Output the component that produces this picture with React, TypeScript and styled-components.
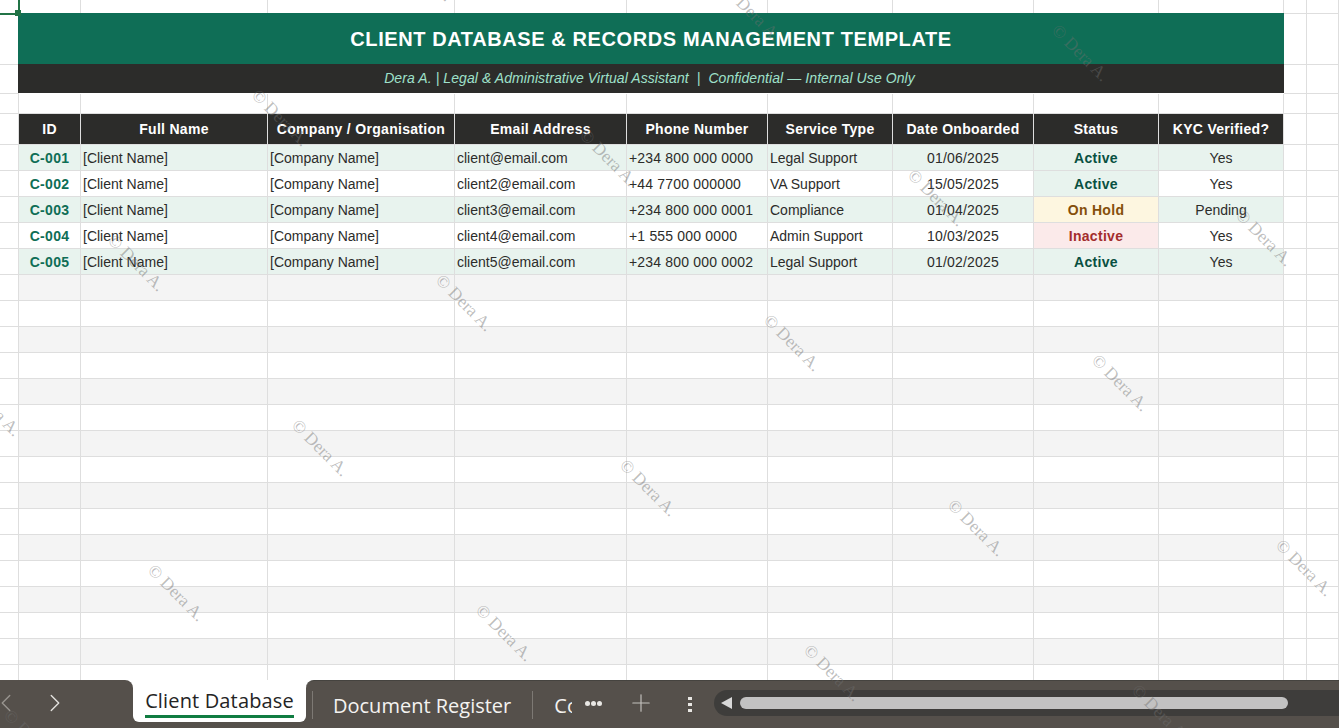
import React, { FC } from 'react'
import styled, { createGlobalStyle } from 'styled-components'
import { ChevronLeft, ChevronRight, Plus } from 'lucide-react'

type Tone = 'none' | 'tint' | 'grey' | 'hold' | 'off'

const clients = [
  { id: 'C-001', name: '[Client Name]', company: '[Company Name]', email: 'client@email.com', phone: '+234 800 000 0000', service: 'Legal Support', date: '01/06/2025', status: 'Active', kyc: 'Yes' },
  { id: 'C-002', name: '[Client Name]', company: '[Company Name]', email: 'client2@email.com', phone: '+44 7700 000000', service: 'VA Support', date: '15/05/2025', status: 'Active', kyc: 'Yes' },
  { id: 'C-003', name: '[Client Name]', company: '[Company Name]', email: 'client3@email.com', phone: '+234 800 000 0001', service: 'Compliance', date: '01/04/2025', status: 'On Hold', kyc: 'Pending' },
  { id: 'C-004', name: '[Client Name]', company: '[Company Name]', email: 'client4@email.com', phone: '+1 555 000 0000', service: 'Admin Support', date: '10/03/2025', status: 'Inactive', kyc: 'Yes' },
  { id: 'C-005', name: '[Client Name]', company: '[Company Name]', email: 'client5@email.com', phone: '+234 800 000 0002', service: 'Legal Support', date: '01/02/2025', status: 'Active', kyc: 'Yes' },
]

const headers = ['ID', 'Full Name', 'Company / Organisation', 'Email Address', 'Phone Number', 'Service Type', 'Date Onboarded', 'Status', 'KYC Verified?']

const statusTone: Record<string, Tone> = { Active: 'tint', 'On Hold': 'hold', Inactive: 'off' }
const statusColor: Record<string, string> = { Active: '#085041', 'On Hold': '#854f0b', Inactive: '#a32d2d' }

const toneColor: Record<Tone, string> = {
  none: '#ffffff',
  tint: '#e8f3ee',
  grey: '#f4f4f4',
  hold: '#fdf6e0',
  off: '#fbeaea',
}

// watermark lattice, one repeat every (328, 40) and (-144, 145)
const marks: [number, number][] = []
for (let r = -1; r <= 4; r++) {
  for (let c = 0; c <= 4; c++) {
    const x = 255 + r * -144 + c * 328
    const y = 82 + r * 145 + c * 40
    if (x > -80 && y > -80 && x < 1339 && y < 728) marks.push([x, y])
  }
}

const App: FC = () => {
  return (
    <Page>
      <GlobalStyle />
      <Sheet>
        <Row $height={14}>
          <EdgeCells />
        </Row>
        <Row $height={51}>
          <Gutter />
          <TitleBand>CLIENT DATABASE &amp; RECORDS MANAGEMENT TEMPLATE</TitleBand>
          <Spare />
          <Spare />
        </Row>
        <Row $height={29}>
          <Gutter />
          <SubBand>Dera A. | Legal &amp; Administrative Virtual Assistant &nbsp;|&nbsp; Confidential — Internal Use Only</SubBand>
          <Spare />
          <Spare />
        </Row>
        <Row $height={20}>
          <EdgeCells />
        </Row>
        <Row $height={31}>
          <Gutter />
          {headers.map((h) => (
            <HeadCell key={h}>{h}</HeadCell>
          ))}
          <Spare />
          <Spare />
        </Row>
        {clients.map((c, i) => {
          const tone: Tone = i % 2 === 0 ? 'tint' : 'none'
          return (
            <Row key={c.id} $height={26}>
              <Gutter />
              <Cell $tone={tone} $center $bold $color="#0f6e56">{c.id}</Cell>
              <Cell $tone={tone}>{c.name}</Cell>
              <Cell $tone={tone}>{c.company}</Cell>
              <Cell $tone={tone}>{c.email}</Cell>
              <Cell $tone={tone} $digits>{c.phone}</Cell>
              <Cell $tone={tone}>{c.service}</Cell>
              <Cell $tone={tone} $center $digits>{c.date}</Cell>
              <Cell $tone={statusTone[c.status]} $center $bold $color={statusColor[c.status]}>{c.status}</Cell>
              <Cell $tone={tone} $center>{c.kyc}</Cell>
              <Spare />
              <Spare />
            </Row>
          )
        })}
        {Array.from({ length: 16 }).map((_, i) => (
          <Row key={i} $height={26}>
            <Gutter />
            {headers.map((h) => (
              <Cell key={h} $tone={i % 2 === 0 ? 'grey' : 'none'} />
            ))}
            <Spare />
            <Spare />
          </Row>
        ))}
      </Sheet>

      <TabBar>
        <NavGroup>
          <NavLeft><ChevronLeft size={30} strokeWidth={1.1} /></NavLeft>
          <NavRight><ChevronRight size={30} strokeWidth={1.1} /></NavRight>
        </NavGroup>
        <ActiveSlot>
          <ActiveTab><ActiveLabel>Client Database</ActiveLabel></ActiveTab>
        </ActiveSlot>
        <TabRest>
          <FirstDivider />
          <SheetTab>Document Register</SheetTab>
          <TabDivider />
          <ClippedTab><span>Compliance</span></ClippedTab>
          <MoreDots>
            <Dot /><Dot /><Dot />
          </MoreDots>
          <AddTab><Plus size={28} strokeWidth={1} /></AddTab>
          <MenuDots>
            <MenuDot /><MenuDot /><MenuDot />
          </MenuDots>
          <ScrollTrack>
            <ScrollArrow />
            <ScrollThumb />
          </ScrollTrack>
        </TabRest>
      </TabBar>

      <SelectEdgeH />
      <SelectEdgeV />
      <SelectHandle />
      {marks.map(([x, y]) => (
        <Watermark key={`${x}-${y}`} $x={x} $y={y}>© Dera A.</Watermark>
      ))}
    </Page>
  )
}

const EdgeCells: FC = () => (
  <>
    <Gutter />
    {headers.map((h) => (
      <Cell key={h} $tone="none" />
    ))}
    <Spare />
    <Spare />
  </>
)

export default App

const GlobalStyle = createGlobalStyle`
  html, body {
    margin: 0;
    padding: 0;
    background: #fff;
  }
`

const Page = styled.div`
  position: relative;
  display: flex;
  flex-direction: column;
  width: 100%;
  height: 100vh;
  overflow: hidden;
  font-family: 'Liberation Sans', Arial, sans-serif;
  font-size: 14px;
  color: #2c2c2a;
  background: #fff;
`

const Sheet = styled.div`
  flex: 0 0 680px;
  height: 680px;
  overflow: hidden;
`

const Row = styled.div<{ $height: number }>`
  display: grid;
  grid-template-columns: 19px 62px 187px 187px 172px 141px 125px 141px 125px 125px 23px 1fr;
  height: ${(p) => p.$height}px;
`

const Gutter = styled.div`
  box-sizing: border-box;
  border-right: 1px solid #dedede;
  border-bottom: 1px solid #dedede;
`

const Spare = styled(Gutter)``

const TitleBand = styled.div`
  grid-column: 2 / 11;
  display: flex;
  align-items: center;
  justify-content: center;
  margin: -1px 0 0 -1px;
  background: #0f6e56;
  color: #fff;
  font-size: 20px;
  font-weight: 700;
  letter-spacing: 0.6px;
`

const SubBand = styled.div`
  grid-column: 2 / 11;
  display: flex;
  align-items: center;
  justify-content: center;
  margin: -1px 0 1px -1px;
  padding: 0 3px 2px 0;
  background: #2c2c2a;
  color: #9fe1cb;
  font-style: italic;
  letter-spacing: 0.08px;
  white-space: pre;
`

const HeadCell = styled.div`
  box-sizing: border-box;
  display: flex;
  align-items: center;
  justify-content: center;
  border-right: 1px solid #dedede;
  border-bottom: 1px solid #dedede;
  background: #2c2c2a;
  color: #fff;
  font-weight: 700;
  letter-spacing: 0.3px;
  white-space: nowrap;
`

const Cell = styled.div<{ $tone: Tone; $center?: boolean; $bold?: boolean; $digits?: boolean; $color?: string }>`
  box-sizing: border-box;
  display: flex;
  align-items: center;
  justify-content: ${(p) => (p.$center ? 'center' : 'flex-start')};
  padding-left: ${(p) => (p.$center ? 0 : 2)}px;
  border-right: 1px solid #dedede;
  border-bottom: 1px solid #dedede;
  background: ${(p) => toneColor[p.$tone]};
  color: ${(p) => p.$color || '#2c2c2a'};
  font-weight: ${(p) => (p.$bold ? 700 : 400)};
  letter-spacing: ${(p) => (p.$bold ? '0.3px' : p.$digits ? '0.18px' : 0)};
  white-space: nowrap;
`

const TabBar = styled.div`
  flex: 0 0 48px;
  display: flex;
  height: 48px;
  font-family: 'Open Sans', 'Noto Sans', sans-serif;
`

const NavGroup = styled.div`
  flex: 0 0 133px;
  box-sizing: border-box;
  display: flex;
  align-items: center;
  padding-bottom: 2px;
  background: #55504b;
  border-top-right-radius: 8px;
`

const NavLeft = styled.span`
  flex: 0 0 30px;
  display: flex;
  margin-left: -9px;
  color: #99958f;
`

const NavRight = styled.span`
  flex: 0 0 30px;
  display: flex;
  margin-left: 19px;
  color: #e4e2df;
`

const ActiveSlot = styled.div`
  flex: 0 0 173px;
  height: 48px;
  background: linear-gradient(#fff 50%, #55504b 50%);
`

const ActiveTab = styled.div`
  box-sizing: border-box;
  display: flex;
  justify-content: center;
  height: 42px;
  padding-top: 7px;
  background: #fff;
  border-radius: 0 0 6px 6px;
`

const ActiveLabel = styled.div`
  height: 31px;
  box-sizing: border-box;
  border-bottom: 3px solid #107c41;
  color: #242424;
  font-size: 20px;
  line-height: 27px;
  font-weight: 500;
  letter-spacing: 0.15px;
  white-space: nowrap;
`

const TabRest = styled.div`
  flex: 1;
  min-width: 0;
  display: flex;
  align-items: center;
  background: #55504b;
  border-top: 1px solid #45433f;
  border-top-left-radius: 8px;
  color: #f4f3f1;
`

const TabDivider = styled.div`
  flex: 0 0 1px;
  height: 28px;
  background: #7d7974;
`

const FirstDivider = styled(TabDivider)`
  margin-left: 6px;
`

const SheetTab = styled.div`
  margin: 1px 21px 0 20px;
  font-size: 20px;
  white-space: nowrap;
`

const ClippedTab = styled.div`
  width: 18px;
  margin: 1px 0 0 21px;
  overflow: hidden;
  font-size: 20px;
  white-space: nowrap;
`

const MoreDots = styled.div`
  display: flex;
  gap: 1px;
  margin: 0 0 3px 13px;
`

const Dot = styled.i`
  width: 5px;
  height: 5px;
  border-radius: 50%;
  background: #e9e7e4;
`

const AddTab = styled.span`
  display: flex;
  margin: 0 0 3px 25px;
  color: #c4c2be;
`

const MenuDots = styled.div`
  display: flex;
  flex-direction: column;
  gap: 3px;
  margin-left: 33px;
`

const MenuDot = styled.i`
  width: 4px;
  height: 3px;
  background: #e9e7e4;
`

const ScrollTrack = styled.div`
  flex: 1;
  display: flex;
  align-items: center;
  height: 26px;
  margin: -3px 0 0 22px;
  background: #3e3d3b;
  border-radius: 13px 0 0 13px;
`

const ScrollArrow = styled.div`
  margin-left: 7px;
  width: 0;
  height: 0;
  border-top: 6px solid transparent;
  border-bottom: 6px solid transparent;
  border-right: 11px solid #d8d8d8;
`

const ScrollThumb = styled.div`
  width: 548px;
  height: 12px;
  margin-left: 8px;
  border-radius: 6px;
  background: #c2c2c2;
`

const SelectEdgeH = styled.div`
  position: absolute;
  left: 0;
  top: 13px;
  width: 18px;
  height: 2px;
  background: #217346;
`

const SelectEdgeV = styled.div`
  position: absolute;
  left: 18px;
  top: 0;
  width: 2px;
  height: 13px;
  background: #217346;
`

const SelectHandle = styled.div`
  position: absolute;
  left: 15px;
  top: 10px;
  width: 6px;
  height: 6px;
  background: #217346;
`

const Watermark = styled.div<{ $x: number; $y: number }>`
  position: absolute;
  left: ${(p) => p.$x}px;
  top: ${(p) => p.$y}px;
  transform-origin: 0 50%;
  transform: rotate(45deg);
  font-family: 'Liberation Serif', 'Times New Roman', serif;
  font-size: 17.5px;
  line-height: 20px;
  color: rgba(110, 110, 110, 0.45);
  white-space: nowrap;
  pointer-events: none;
`
